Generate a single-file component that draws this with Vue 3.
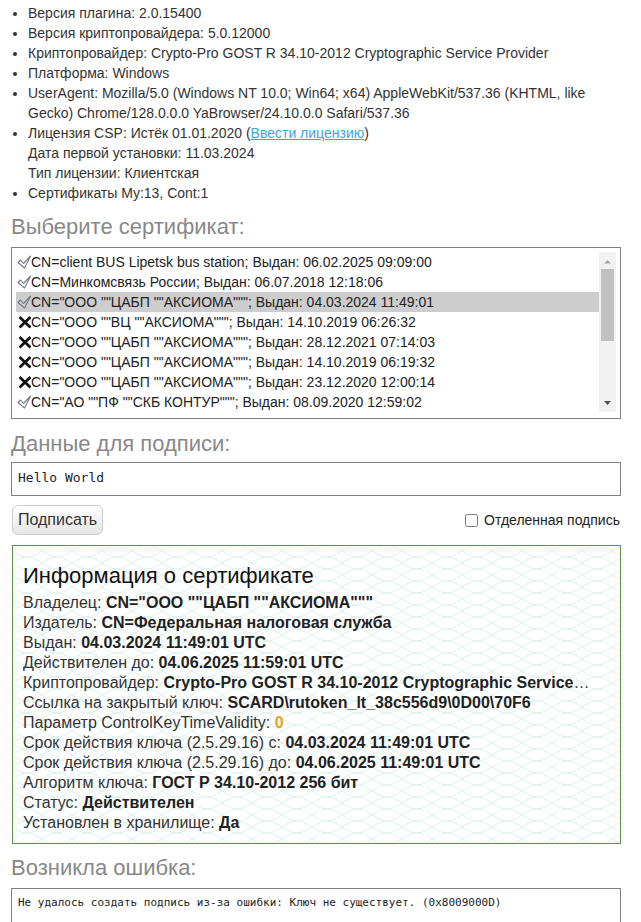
<script setup>
const certs = [
  { ok: true, text: 'CN=client BUS Lipetsk bus station; Выдан: 06.02.2025 09:09:00' },
  { ok: true, text: 'CN=Минкомсвязь России; Выдан: 06.07.2018 12:18:06' },
  { ok: true, sel: true, text: 'CN="ООО ""ЦАБП ""АКСИОМА"""; Выдан: 04.03.2024 11:49:01' },
  { ok: false, text: 'CN="ООО ""ВЦ ""АКСИОМА"""; Выдан: 14.10.2019 06:26:32' },
  { ok: false, text: 'CN="ООО ""ЦАБП ""АКСИОМА"""; Выдан: 28.12.2021 07:14:03' },
  { ok: false, text: 'CN="ООО ""ЦАБП ""АКСИОМА"""; Выдан: 14.10.2019 06:19:32' },
  { ok: false, text: 'CN="ООО ""ЦАБП ""АКСИОМА"""; Выдан: 23.12.2020 12:00:14' },
  { ok: true, text: 'CN="АО ""ПФ ""СКБ КОНТУР"""; Выдан: 08.09.2020 12:59:02' }
]
const info = [
  ['Владелец: ', 'CN="ООО ""ЦАБП ""АКСИОМА"""'],
  ['Издатель: ', 'CN=Федеральная налоговая служба'],
  ['Выдан: ', '04.03.2024 11:49:01 UTC'],
  ['Действителен до: ', '04.06.2025 11:59:01 UTC'],
  ['Криптопровайдер: ', 'Crypto-Pro GOST R 34.10-2012 Cryptographic Service Provider'],
  ['Ссылка на закрытый ключ: ', 'SCARD\\rutoken_lt_38c556d9\\0D00\\70F6'],
  ['Параметр ControlKeyTimeValidity: ', '0', true],
  ['Срок действия ключа (2.5.29.16) с: ', '04.03.2024 11:49:01 UTC'],
  ['Срок действия ключа (2.5.29.16) до: ', '04.06.2025 11:49:01 UTC'],
  ['Алгоритм ключа: ', 'ГОСТ Р 34.10-2012 256 бит'],
  ['Статус: ', 'Действителен'],
  ['Установлен в хранилище: ', 'Да']
]
</script>

<template>
  <div class="page">
    <ul class="facts">
      <li>Версия плагина: 2.0.15400</li>
      <li>Версия криптопровайдера: 5.0.12000</li>
      <li>Криптопровайдер: Crypto-Pro GOST R 34.10-2012 Cryptographic Service Provider</li>
      <li>Платформа: Windows</li>
      <li>UserAgent: Mozilla/5.0 (Windows NT 10.0; Win64; x64) AppleWebKit/537.36 (KHTML, like Gecko) Chrome/128.0.0.0 YaBrowser/24.10.0.0 Safari/537.36</li>
      <li>Лицензия CSP: Истёк 01.01.2020 (<a href="#">Ввести лицензию</a>)<br>Дата первой установки: 11.03.2024<br>Тип лицензии: Клиентская</li>
      <li>Сертификаты My:13, Cont:1</li>
    </ul>

    <h2 class="heading first">Выберите сертификат:</h2>
    <div class="listbox">
      <div class="rows">
        <div v-for="c in certs" :key="c.text" class="row" :class="{ selected: c.sel }">
          <svg v-if="c.ok" class="mark" width="15" height="14" viewBox="0 0 15 14">
            <path d="M2 7.500 L4.500 5 L7.500 8.500 L14.700 1 L8.500 13 Z" fill="none" stroke="#717a86" stroke-width="1.100" stroke-linejoin="round"/>
          </svg>
          <svg v-else class="mark" width="15" height="14" viewBox="0 0 15 14">
            <path d="M3.500 2 L14.500 12.500 M14.500 2 L3.500 12.500" fill="none" stroke="#111" stroke-width="2.700"/>
          </svg>
          <span>{{ c.text }}</span>
        </div>
      </div>
      <div class="scrollbar">
        <svg class="arrow" width="17" height="17" viewBox="0 0 17 17"><path d="M5 11.500 H12 L8.500 8 Z" fill="#a3a3a3"/></svg>
        <div class="track"><div class="thumb"></div></div>
        <svg class="arrow" width="17" height="17" viewBox="0 0 17 17"><path d="M5 6 H12 L8.500 10 Z" fill="#505050"/></svg>
      </div>
    </div>

    <h2 class="heading">Данные для подписи:</h2>
    <div class="mono-box">Hello World</div>

    <div class="actions">
      <button class="sign" type="button">Подписать</button>
      <label class="detached"><input type="checkbox">Отделенная подпись</label>
    </div>

    <section class="card">
      <svg class="guilloche" width="100%" height="100%" aria-hidden="true">
        <defs>
          <pattern id="wave" x="-1" y="-1" width="30" height="12" patternUnits="userSpaceOnUse">
            <g fill="none" stroke="#d9efe9" stroke-width="0.900">
              <path d="M0 6 C5.500 2.500 10 0 15 0 S24.500 2.500 30 6"/>
              <path d="M0 6 C5.500 9.500 10 12 15 12 S24.500 9.500 30 6"/>
              <path d="M0 -6 C5.500 -2.500 10 0 15 0 S24.500 -2.500 30 -6"/>
              <path d="M0 18 C5.500 14.500 10 12 15 12 S24.500 14.500 30 18"/>
            </g>
          </pattern>
        </defs>
        <rect width="100%" height="100%" fill="url(#wave)"/>
      </svg>
      <div class="card-body">
        <h3 class="card-title">Информация о сертификате</h3>
        <div v-for="r in info" :key="r[0]" class="info-row">{{ r[0] }}<b :class="{ warn: r[2] }">{{ r[1] }}</b></div>
      </div>
    </section>

    <h2 class="heading error">Возникла ошибка:</h2>
    <div class="mono-box error-box">Не удалось создать подпись из-за ошибки: Ключ не существует. (0x8009000D)</div>
  </div>
</template>

<style>
html, body { margin: 0; background: #fff; }
</style>

<style scoped>
.page {
  width: 641px;
  height: 922px;
  overflow: hidden;
  box-sizing: border-box;
  padding: 3px 20px 0 11px;
  font: 14px/20px "Liberation Sans", Arial, sans-serif;
  color: #333;
}
.facts { margin: 0; padding: 0 0 0 17px; }
.facts a { color: #3ba6dc; text-decoration: underline; }
.heading {
  margin: 0;
  font-size: 22px;
  line-height: 24px;
  font-weight: 400;
  color: #888;
}
.first { margin-top: 12px; }
.listbox {
  margin-top: 8px;
  height: 172px;
  box-sizing: border-box;
  border: 1px solid #808080;
  padding: 4px;
  display: flex;
  background: #fff;
}
.rows { flex: 1; min-width: 0; }
.row {
  height: 20px;
  display: flex;
  align-items: center;
  color: #222;
  white-space: nowrap;
}
.row.selected { background: #cdcdcd; }
.mark { flex: none; width: 15px; }
.scrollbar {
  flex: none;
  width: 17px;
  height: 160px;
  background: #f1f1f1;
  display: flex;
  flex-direction: column;
}
.arrow { flex: none; display: block; }
.track { flex: 1; padding: 0 2px; }
.thumb { height: 72px; background: #c1c1c1; }
.listbox + .heading { margin-top: 13px; }
.mono-box {
  margin-top: 6px;
  height: 34px;
  box-sizing: border-box;
  border: 1px solid #808080;
  padding: 5px 6px;
  font: 13px/20px "DejaVu Sans Mono", monospace;
  color: #222;
}
.actions {
  margin: 9px 1px 0 1px;
  display: flex;
  justify-content: space-between;
  align-items: center;
}
.sign {
  width: 91px;
  height: 30px;
  padding: 0;
  border: 1px solid #ccc;
  border-radius: 6px;
  background: linear-gradient(#fff, #e6e6e6);
  font: 16px "Liberation Sans", Arial, sans-serif;
  color: #333;
}
.detached { display: flex; align-items: center; color: #222; }
.detached input { margin: 0 6px 0 0; width: 13px; height: 13px; }
.card {
  position: relative;
  margin: 10px 0 0 1px;
  height: 299px;
  box-sizing: border-box;
  border: 1px solid #5f9150;
}
.guilloche { position: absolute; inset: 0; }
.card-body {
  position: relative;
  padding: 17px 27px 0 10px;
  font-size: 16px;
  line-height: 20px;
  color: #333;
}
.card-title {
  margin: 0 0 4px;
  font-size: 22px;
  line-height: 26px;
  font-weight: 400;
  color: #111;
}
.info-row { white-space: nowrap; overflow: hidden; text-overflow: ellipsis; }
.info-row b { color: #222; }
.info-row b.warn { color: #f0a020; }
.error { margin-top: 12px; }
.error-box {
  margin-top: 8px;
  height: 60px;
  font-size: 11px;
  padding-top: 4px;
}
</style>
